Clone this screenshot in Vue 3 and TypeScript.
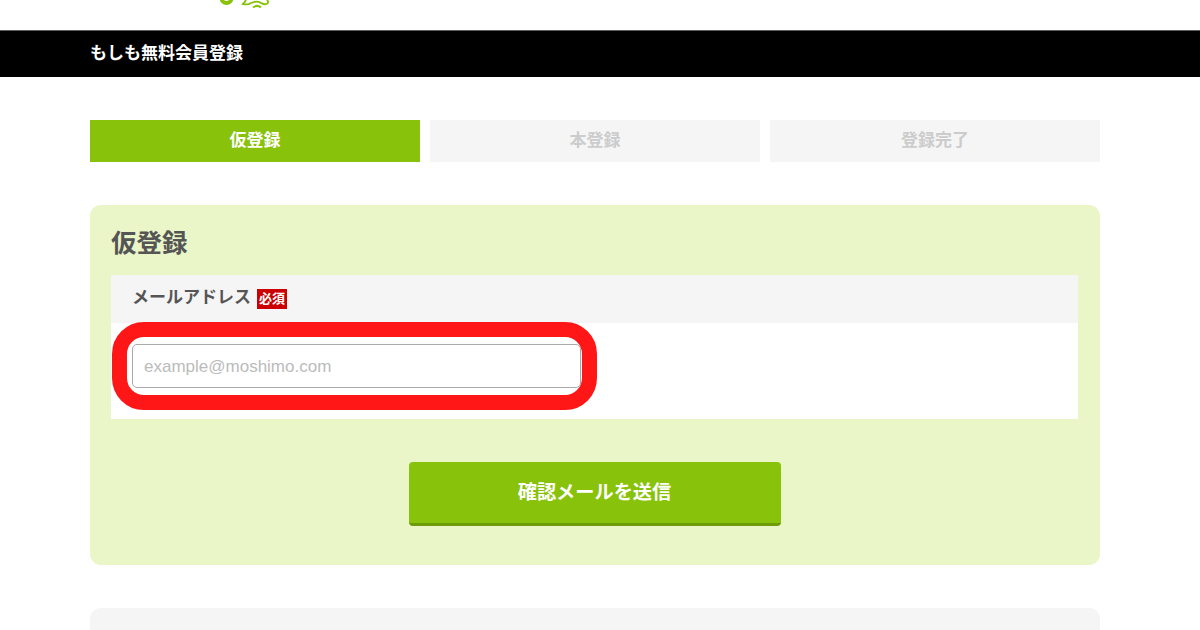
<template>
    <div class="page">
        <header class="site-header">
            <svg class="logo" width="56" height="10" viewBox="0 0 56 10" fill="none" stroke="#88c20a">
                <circle cx="8.5" cy="-2" r="5" stroke-width="4" />
                <path d="M28 -1 C28 1 26.5 2.5 25 4 C28.5 4.8 30.5 4.8 33 3 C37 1.2 41 1.2 44 3.4 C46.5 5 49.5 4.2 50 2.5 C50.3 1.5 49.5 0.5 49 -1" stroke-width="1.9" />
                <path d="M35 7.6 Q39 4.2 43 7.6" stroke-width="2" />
            </svg>
        </header>

        <div class="title-bar">
            <h1>もしも無料会員登録</h1>
        </div>

        <main class="container">
            <ol class="steps">
                <li v-for="(step, index) in steps" :key="step" :class="{ active: index === current }">{{ step }}</li>
            </ol>

            <form class="card" @submit.prevent>
                <h2>仮登録</h2>
                <div class="field-head">
                    <label for="email">メールアドレス</label>
                    <span class="required">必須</span>
                </div>
                <div class="field-body">
                    <div class="input-wrap">
                        <input id="email" v-model="email" type="email" placeholder="example@moshimo.com" />
                        <!-- highlight drawn around the input -->
                        <div class="highlight"></div>
                    </div>
                </div>
                <button type="submit">確認メールを送信</button>
            </form>

            <section class="next-card"></section>
        </main>
    </div>
</template>

<script setup lang="ts">
import { ref } from 'vue'

const steps: string[] = ['仮登録', '本登録', '登録完了']
const current = ref<number>(0)
const email = ref<string>('')
</script>

<style>
body {
    margin: 0;
    overflow: hidden;
}
</style>

<style scoped>
.page {
    height: 630px;
    overflow: hidden;
    background: #fff;
    color: #555;
    font-family: "Noto Sans CJK JP", sans-serif;
    font-weight: 700;
}

.page * {
    box-sizing: border-box;
}

.site-header {
    height: 30px;
    padding-left: 218px;
}

.logo {
    display: block;
}

.title-bar {
    height: 47px;
    padding-left: 90px;
    background: #000;
    border-top: 1px solid #5c5f5c;
}

h1 {
    margin: 0;
    color: #fff;
    font-size: 17px;
    line-height: 41px;
}

.container {
    width: 1010px;
    margin: 43px 0 0 90px;
}

.steps {
    display: grid;
    grid-template-columns: repeat(3, 1fr);
    gap: 10px;
    margin: 0;
    padding: 0;
    list-style: none;
}

.steps li {
    height: 42px;
    background: #f5f5f5;
    color: #ccc;
    font-size: 17px;
    line-height: 37px;
    text-align: center;
}

.steps li.active {
    background: #88c20a;
    color: #fff;
}

.card {
    height: 360px;
    margin-top: 43px;
    padding: 21px 22px 0 21px;
    border-radius: 11px;
    background: #eaf6c8;
}

h2 {
    height: 49px;
    margin: 0;
    font-size: 25.5px;
    line-height: 30px;
}

.field-head {
    display: flex;
    align-items: flex-start;
    height: 48px;
    padding-left: 21px;
    background: #f5f5f5;
    font-size: 17px;
}

.field-head label {
    line-height: 41px;
}

.required {
    width: 30px;
    height: 20px;
    margin: 14px 0 0 6px;
    background: #c00;
    color: #fff;
    font-size: 13px;
    line-height: 18px;
    text-align: center;
}

.field-body {
    height: 96px;
    padding: 21px;
    background: #fff;
}

.input-wrap {
    position: relative;
    width: 450px;
    height: 44px;
}

input {
    display: block;
    width: 449px;
    height: 100%;
    padding: 2px 11px 0;
    border: 1px solid #aaa;
    border-radius: 5px;
    background: #fff;
    color: #555;
    font-family: "Liberation Sans", Arial, sans-serif;
    font-size: 17px;
    outline: none;
}

input::placeholder {
    color: #bbb;
}

.highlight {
    position: absolute;
    inset: -22px -15px -22px -20px;
    border: 15px solid #ff1616;
    border-radius: 32px;
    pointer-events: none;
}

button {
    display: block;
    width: 372px;
    height: 64px;
    margin: 43px auto 0;
    padding: 0 0 4px;
    border: 0;
    border-bottom: 3px solid #6d9b08;
    border-radius: 4px;
    background: #88c20a;
    color: #fff;
    font-family: inherit;
    font-size: 19.2px;
    font-weight: 700;
}

.next-card {
    height: 60px;
    margin-top: 43px;
    border-radius: 11px;
    background: #f5f5f5;
}
</style>
